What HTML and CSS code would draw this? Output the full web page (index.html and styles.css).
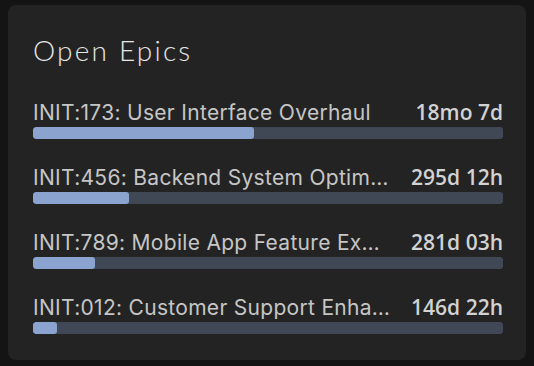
FILE: index.html
```html
<!DOCTYPE html>
<html>
<head>
<meta charset="utf-8">
<link rel="stylesheet" href="styles.css">
</head>
<body>
<div class="card">
  <h2 class="title">Open Epics</h2>
  <div class="list">
    <div class="row">
      <div class="head"><span class="label">INIT:173: User Interface Overhaul</span><span class="value">18mo 7d</span></div>
      <div class="track"><div class="fill" style="width:47%"></div></div>
    </div>
    <div class="row">
      <div class="head"><span class="label">INIT:456: Backend System Optimization</span><span class="value">295d 12h</span></div>
      <div class="track"><div class="fill" style="width:20.4%"></div></div>
    </div>
    <div class="row">
      <div class="head"><span class="label">INIT:789: Mobile App Feature Expansion</span><span class="value">281d 03h</span></div>
      <div class="track"><div class="fill" style="width:13.2%"></div></div>
    </div>
    <div class="row">
      <div class="head"><span class="label">INIT:012: Customer Support Enhancements</span><span class="value">146d 22h</span></div>
      <div class="track"><div class="fill" style="width:5.1%"></div></div>
    </div>
  </div>
</div>
</body>
</html>
```
FILE: styles.css
```css
html, body {
  margin: 0;
  padding: 0;
  background: #141414;
}
body {
  padding: 5px 8px 6px 8px;
  font-family: Inter, "Liberation Sans", sans-serif;
}
.card {
  background: #232323;
  border-radius: 8px;
  padding: 29px 23px 26px 25px;
  height: 355px;
  box-sizing: border-box;
}
.title {
  margin: 0;
  font-family: Lato, sans-serif;
  font-weight: 300;
  font-size: 28px;
  line-height: 32px;
  letter-spacing: 2.2px;
  color: #e6e6e6;
}
.list {
  margin-top: 34px;
  display: flex;
  flex-direction: column;
  gap: 26px;
}
.row {
  display: flex;
  flex-direction: column;
  gap: 2px;
}
.head {
  display: flex;
  justify-content: space-between;
  align-items: baseline;
  gap: 20px;
  line-height: 25px;
}
.label {
  font-size: 21px;
  letter-spacing: 0.3px;
  color: #c6c6c6;
  white-space: nowrap;
  overflow: hidden;
  text-overflow: ellipsis;
  min-width: 0;
}
.value {
  font-family: "Open Sans", sans-serif;
  font-weight: 600;
  font-size: 21px;
  color: #d2d2d2;
  white-space: nowrap;
  flex-shrink: 0;
}
.track {
  height: 12px;
  border-radius: 3px;
  background: #404855;
  overflow: hidden;
}
.fill {
  height: 100%;
  border-radius: 3px;
  background: #8aa4cf;
}
```
